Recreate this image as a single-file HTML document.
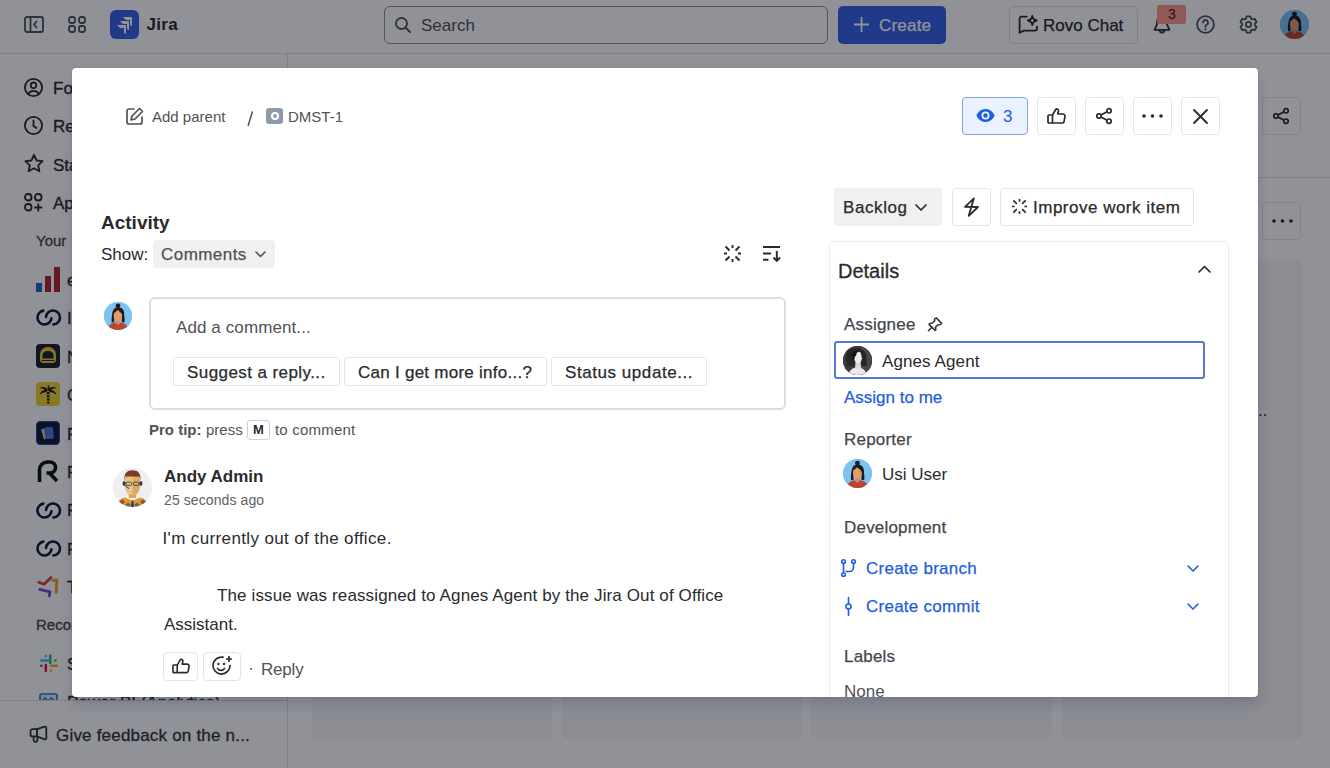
<!DOCTYPE html>
<html><head><meta charset="utf-8">
<style>
*{box-sizing:border-box;margin:0;padding:0}
html,body{width:1330px;height:768px;overflow:hidden;background:#fff}
body{font-family:"Liberation Sans",sans-serif;color:#292A2E;position:relative;font-size:17px}
.a{position:absolute}
.t{position:absolute;white-space:nowrap;line-height:20px;height:20px}
svg{display:block;overflow:visible}
.ic{position:absolute}
.btn{position:absolute;border:1px solid #E3E4E7;border-radius:4px;background:#fff}
#bg{position:absolute;left:0;top:0;width:1330px;height:768px}
#blanket{position:absolute;left:0;top:0;width:1330px;height:768px;background:rgba(4,6,21,0.44)}
#mc .t{transform:translateY(1px)}
.m{-webkit-text-stroke:0.25px currentColor}
#modal{position:absolute;left:72px;top:68px;width:1186px;height:629px;background:#fff;border-radius:4px;box-shadow:0 8px 12px rgba(9,30,66,0.15),0 0 1px rgba(9,30,66,0.31);overflow:hidden}
</style></head><body>
<svg width="0" height="0" style="position:absolute">
<defs>
<symbol id="usi" viewBox="0 0 28 28">
 <rect width="28" height="28" fill="#7CC3F2"/>
 <path d="M9 8.5C8 12.5 7.2 16.5 7.8 20.5L10.2 20.3L10.3 12Z" fill="#1E1B22"/>
 <path d="M19 8.5C20.3 12.5 21 16.5 20.5 20.2L17.8 20.2L17.7 12Z" fill="#1E1B22"/>
 <ellipse cx="13.9" cy="13.9" rx="4.2" ry="6.3" fill="#E49B68"/>
 <path d="M8.7 11.5C8.6 7.2 11 5.2 14 5.2C17.5 5.2 20 7.2 20.3 11.5L19.3 14.5C18 11.8 16 9.2 13.3 8C12 9.8 10.5 10.8 8.7 11.5Z" fill="#1E1B22"/>
 <ellipse cx="14" cy="3.8" rx="2.4" ry="2.2" fill="#1E1B22"/>
 <path d="M3.5 28.5C4 23.5 7 20.8 11.5 20.5L14 23L16.5 20.5C21 20.8 24 23.5 24.5 28.5Z" fill="#B9462D"/>
 <path d="M11.5 20.5L14 23L16.5 20.5L15.8 18.8H12.2Z" fill="#D2866A"/>
</symbol>
<symbol id="andy" viewBox="0 0 39 39">
 <rect width="39" height="39" fill="#EEEFF1"/>
 <path d="M3 40c1-6 4-9.5 9-10.5l7.5 3 7.5-3c5 1 8 4.5 9 10.5z" fill="#E39A2B"/>
 <path d="M6 34l3-2.5 3 2.5-3 2.5zM12 37l3-2.5 3 2.5-3 2.5zM21 37l3-2.5 3 2.5-3 2.5zM27 34l3-2.5 3 2.5-3 2.5z" fill="#566779"/>
 <path d="M9 31l3 3-3 2.5zM30 31l-3 3 3 2.5z" fill="#A8561F"/>
 <path d="M13.5 29.5l6 3.5 6-3.5-1.5-1.5h-9z" fill="#F4F6F8"/>
 <path d="M18.7 32.5h1.6l.7 6.5h-3z" fill="#2D3E50"/>
 <path d="M15.5 23h8l-.3 7h-7.4z" fill="#DDA65C"/>
 <path d="M12 7.5h15v10c0 6-2.5 9.5-7.5 9.5S12 23.5 12 17.5z" fill="#EBC183"/>
 <path d="M19.5 7.5h7.5v10c0 6-2.5 9.5-7.5 9.5z" fill="#DFA965"/>
 <path d="M11.3 13C11 5 14 2.2 19.5 2.2S28 5 27.7 13l-1-4.5H12.3z" fill="#7B3A22"/>
 <rect x="9.7" y="13.2" width="2.8" height="4.6" rx="1.3" fill="#333A44"/>
 <rect x="26.5" y="13.2" width="2.8" height="4.6" rx="1.3" fill="#333A44"/>
 <rect x="13" y="14.2" width="5.6" height="3.2" rx="1.2" fill="none" stroke="#3B3B3B" stroke-width=".9"/>
 <rect x="20.4" y="14.2" width="5.6" height="3.2" rx="1.2" fill="none" stroke="#3B3B3B" stroke-width=".9"/>
 <path d="M11.5 17.5l5.5 3.5" stroke="#333A44" stroke-width=".9"/>
 <circle cx="17.3" cy="21.2" r=".9" fill="#F4F6F8"/>
</symbol>
<symbol id="agnes" viewBox="0 0 29 29">
 <rect width="29" height="29" fill="#3C3C3C"/>
 <rect x="18" width="11" height="29" fill="#474747"/>
 <path d="M3 12C3 5 7 2 13 2s9 3 10 7l1 11H4z" fill="#262626"/>
 <path d="M5 29c1.5-5 4.5-7.5 9.5-7.5S22.5 24 24 29z" fill="#E8E8E8"/>
 <path d="M12 22.5l.5-7h5l.8 7z" fill="#DADADA"/>
 <path d="M13 4.5c3 0 5.5 2 5.5 6 0 1 .8 2 .8 2.5l-.8.6c0 2-1 3.5-3.5 3.5-2.3 0-3.8-2-4-5.5z" fill="#ECECEC"/>
 <path d="M9 13c-.5-5 1.5-9 5-9 1.5 0 2.5.6 3 1.4-2.5.2-4.5 2-5 5l-1 4z" fill="#1C1C1C"/>
 <circle cx="11" cy="8.2" r="2.4" fill="#151515"/>
</symbol>
</defs></svg>
<div id="bg">
  <!-- top nav -->
  <div class="a" style="left:0;top:53px;width:1330px;height:1px;background:#DDDEE1"></div>
  <!-- sidebar toggle -->
  <svg class="ic" style="left:24px;top:16px" width="20" height="17" viewBox="0 0 20 17"><rect x="1" y="1" width="18" height="15" rx="2" fill="none" stroke="#505258" stroke-width="1.8"/><line x1="6.5" y1="1" x2="6.5" y2="16" stroke="#505258" stroke-width="1.8"/><path d="M12.5 5.5 L10 8.5 L12.5 11.5" fill="none" stroke="#505258" stroke-width="1.8" stroke-linecap="round" stroke-linejoin="round"/></svg>
  <!-- apps -->
  <svg class="ic" style="left:68px;top:16px" width="18" height="17" viewBox="0 0 18 17"><g fill="none" stroke="#505258" stroke-width="1.8"><rect x="1" y="1" width="6" height="6" rx="2.2"/><rect x="11" y="1" width="6" height="6" rx="2.2"/><rect x="1" y="10" width="6" height="6" rx="2.2"/><rect x="11" y="10" width="6" height="6" rx="2.2"/></g></svg>
  <!-- jira logo -->
  <div class="a" style="left:110px;top:10px;width:29px;height:29px;border-radius:6px;background:#3563E3"></div>
  <svg class="ic" style="left:115px;top:16px" width="20" height="18" viewBox="0 0 20 18"><g fill="#fff"><path d="M8 1h9v9a2 2 0 0 1-2-2V4h-4z" transform="translate(0,0)"/><path d="M5 5h9v9a2 2 0 0 1-2-2V8H8z"/><path d="M2 9h9v9a2 2 0 0 1-2-2v-4H5z"/></g></svg>
  <div class="t" style="left:146.5px;top:15px;font-weight:700;font-size:17px;color:#292A2E;letter-spacing:.3px">Jira</div>
  <!-- search -->
  <div class="a" style="left:384px;top:6px;width:444px;height:38px;border:1px solid #8C8F97;border-radius:6px"></div>
  <svg class="ic" style="left:395px;top:17px" width="16" height="16" viewBox="0 0 16 16"><circle cx="6.5" cy="6.5" r="5.5" fill="none" stroke="#505258" stroke-width="1.8"/><line x1="10.5" y1="10.5" x2="15" y2="15" stroke="#505258" stroke-width="1.8" stroke-linecap="round"/></svg>
  <div class="t" style="left:421px;top:15.5px;color:#505258">Search</div>
  <!-- create -->
  <div class="a" style="left:838px;top:6px;width:108px;height:38px;border-radius:5px;background:#3563E3"></div>
  <svg class="ic" style="left:853px;top:16px" width="17" height="17" viewBox="0 0 17 17"><path d="M8.5 1v15M1 8.5h15" stroke="#fff" stroke-width="1.8"/></svg>
  <div class="t m" style="left:879px;top:16px;color:#fff;letter-spacing:.2px">Create</div>
  <!-- rovo -->
  <div class="a" style="left:1009px;top:6px;width:129px;height:38px;border:1px solid #DDDEE1;border-radius:5px"></div>
  <svg class="ic" style="left:1012px;top:10px" width="30" height="30" viewBox="0 0 30 30"><g fill="none" stroke="#292A2E" stroke-width="1.8" stroke-linejoin="round" stroke-linecap="round"><path d="M14.8 6.6H9.6a2 2 0 0 0-2 2V22.8L11.8 20.6H23a2 2 0 0 0 2-2V16.6"/><path d="M20.3 6Q20.9 9.9 24.8 10.5Q20.9 11.1 20.3 15Q19.7 11.1 15.8 10.5Q19.7 9.9 20.3 6Z"/></g></svg>
  <div class="t m" style="left:1043px;top:15.5px;color:#292A2E">Rovo Chat</div>
  <!-- bell -->
  <svg class="ic" style="left:1153px;top:14px" width="18" height="21" viewBox="0 0 18 21"><g fill="none" stroke="#33353A" stroke-width="1.8" stroke-linejoin="round"><path d="M4 10.5V7.5a5 5 0 0 1 10 0v3l2.5 5.3H1.5z"/><path d="M6.5 16a2.5 2.5 0 0 0 5 0"/></g></svg>
  <div class="a" style="left:1157px;top:5px;width:29px;height:19px;border-radius:2px;background:#FF9A8A;color:#1E1F23;font-size:14px;line-height:19px;text-align:center;padding-left:1px">3</div>
  <!-- help -->
  <svg class="ic" style="left:1195.7px;top:15.2px" width="19" height="19" viewBox="0 0 19 19"><circle cx="9.5" cy="9.5" r="8.4" fill="none" stroke="#505258" stroke-width="1.8"/><path d="M7 7.5a2.5 2.5 0 1 1 3.5 2.3c-.7.3-1 .8-1 1.5v.5" fill="none" stroke="#505258" stroke-width="1.8" stroke-linecap="round"/><circle cx="9.5" cy="14.3" r="1.1" fill="#505258"/></svg>
  <!-- settings -->
  <svg class="ic" style="left:1238.5px;top:15px" width="19" height="19" viewBox="0 0 19 19"><path d="M6.94 3.74 L7.61 1.32 L11.39 1.32 L12.06 3.74 L13.20 4.40 L15.64 3.77 L17.53 7.04 L15.77 8.84 L15.77 10.16 L17.53 11.96 L15.64 15.23 L13.20 14.60 L12.06 15.26 L11.39 17.68 L7.61 17.68 L6.94 15.26 L5.80 14.60 L3.36 15.23 L1.47 11.96 L3.23 10.16 L3.23 8.84 L1.47 7.04 L3.36 3.77 L5.80 4.40Z" fill="none" stroke="#505258" stroke-width="1.8" stroke-linejoin="round"/><circle cx="9.5" cy="9.5" r="2.6" fill="none" stroke="#505258" stroke-width="1.8"/></svg>
  <!-- avatar -->
  <div class="a" style="left:1280px;top:10px;width:29px;height:29px;border-radius:50%;background:#7FC3EE;overflow:hidden"><svg width="29" height="29"><use href="#usi"/></svg></div>


  <!-- main area -->
  <div class="btn" style="left:1262px;top:97px;width:39px;height:38px;border-color:#E4E5E7"></div>
  <svg class="ic" style="left:1273px;top:108px" width="16" height="16" viewBox="0 0 16 16"><g fill="none" stroke="#292A2E" stroke-width="1.7"><circle cx="3" cy="8" r="2.2"/><circle cx="13" cy="2.8" r="2.2"/><circle cx="13" cy="13.2" r="2.2"/><path d="M5 7l6-3.2M5 9l6 3.2"/></g></svg>
  <div class="a" style="left:288px;top:177px;width:1042px;height:1px;background:#DDDEE1"></div>
  <div class="btn" style="left:1262px;top:202px;width:39px;height:38px;border-color:#E4E5E7"></div>
  <svg class="ic" style="left:1272px;top:219px" width="21" height="4" viewBox="0 0 21 4"><circle cx="2" cy="2" r="1.8" fill="#292A2E"/><circle cx="10.5" cy="2" r="1.8" fill="#292A2E"/><circle cx="19" cy="2" r="1.8" fill="#292A2E"/></svg>
  <div class="a" style="left:312px;top:260px;width:240px;height:479px;border-radius:6px;background:#F6F6F7"></div>
  <div class="a" style="left:562px;top:260px;width:240px;height:479px;border-radius:6px;background:#F6F6F7"></div>
  <div class="a" style="left:811px;top:260px;width:241px;height:479px;border-radius:6px;background:#F6F6F7"></div>
  <div class="a" style="left:1062px;top:260px;width:240px;height:479px;border-radius:6px;background:#F6F6F7"></div>
  <div class="t" style="left:1258px;top:401px;color:#292A2E">..</div>
  <!-- sidebar -->

  <!-- sidebar nav items -->
  <svg class="ic" style="left:24px;top:78px" width="19" height="19" viewBox="0 0 19 19"><g fill="none" stroke="#292A2E" stroke-width="1.8"><circle cx="9.5" cy="9.5" r="8.6"/><circle cx="9.5" cy="7.3" r="2.8"/><path d="M4.2 15.8c1.2-2 3-3 5.3-3s4.1 1 5.3 3"/></g></svg>
  <div class="t" style="left:53px;top:79px;color:#292A2E;-webkit-text-stroke:.3px">For you</div>
  <svg class="ic" style="left:24px;top:116px" width="19" height="19" viewBox="0 0 19 19"><g fill="none" stroke="#292A2E" stroke-width="1.8" stroke-linecap="round"><circle cx="9.5" cy="9.5" r="8.6"/><path d="M9.5 4.5v5.5l3 2"/></g></svg>
  <div class="t" style="left:53px;top:117px;color:#292A2E;-webkit-text-stroke:.3px">Recent</div>
  <svg class="ic" style="left:24px;top:154px" width="20" height="19" viewBox="0 0 20 19"><path d="M10 1l2.6 5.5 6 .7-4.4 4.1 1.2 6L10 14.3 4.6 17.3l1.2-6L1.4 7.2l6-.7z" fill="none" stroke="#292A2E" stroke-width="1.8" stroke-linejoin="round"/></svg>
  <div class="t" style="left:53px;top:156px;color:#292A2E;-webkit-text-stroke:.3px">Starred</div>
  <svg class="ic" style="left:24px;top:193px" width="19" height="19" viewBox="0 0 19 19"><g fill="none" stroke="#292A2E" stroke-width="1.8"><rect x="1" y="1" width="6.5" height="6.5" rx="3"/><rect x="11" y="1" width="6.5" height="6.5" rx="3"/><rect x="1" y="11" width="6.5" height="6.5" rx="3"/><path d="M14.3 10.5v8M10.3 14.5h8"/></g></svg>
  <div class="t" style="left:53px;top:194px;color:#292A2E;-webkit-text-stroke:.3px">Apps</div>
  <div class="t" style="left:36px;top:231px;font-size:15px;color:#44464C;-webkit-text-stroke:.3px">Your</div>
  <!-- project icons -->
  <svg class="ic" style="left:36px;top:267px" width="25" height="25" viewBox="0 0 25 25"><rect x="0" y="16" width="6" height="9" fill="#2266CC"/><rect x="9" y="9" width="6" height="16" fill="#B3272D"/><rect x="18" y="0" width="6" height="25" fill="#B3272D"/></svg>
  <div class="t" style="left:67px;top:271px;color:#292A2E;-webkit-text-stroke:.3px">eCommerce</div>
  <svg class="ic" style="left:37px;top:309px" width="24" height="18" viewBox="0 0 24 18"><path d="M6.3 1.6A7 7 0 1 0 14.46 9.23M9.03 7.89A7 7 0 1 1 16.37 15.49" fill="none" stroke="#0B1C3F" stroke-width="2.6" stroke-linecap="round"/></svg>
  <div class="t" style="left:67px;top:309px;color:#292A2E;-webkit-text-stroke:.3px">Integrations</div>
  <div class="a" style="left:36px;top:344px;width:24px;height:24px;border-radius:4px;background:#1B2236"></div>
  <svg class="ic" style="left:36px;top:344px" width="24" height="24" viewBox="0 0 24 24"><path d="M4 17V11C4 6 7.5 3 12 3s8 3 8 8v6l-2 2H6z" fill="#E9C63A"/><path d="M6.5 12c0-3 2-5 5.5-5s5.5 2 5.5 5v2.5H6.5z" fill="#1B2236"/><path d="M5.5 16.5h13" stroke="#1B2236" stroke-width="1"/></svg>
  <div class="t" style="left:67px;top:348px;color:#292A2E;-webkit-text-stroke:.3px">NASA</div>
  <div class="a" style="left:36px;top:382px;width:24px;height:24px;border-radius:3px;background:#F2D231"></div>
  <svg class="ic" style="left:36px;top:382px" width="24" height="24" viewBox="0 0 24 24"><g fill="#161A2E"><path d="M12 8C10 4.5 5.5 4 3 6.5c2.5-.5 4.5 0 6 1.5-3 .2-5 2.5-5.5 5 2-2 4.5-3 7-3z"/><path d="M12 8c2-3.5 6.5-4 9-1.5-2.5-.5-4.5 0-6 1.5 3 .2 5 2.5 5.5 5-2-2-4.5-3-7-3z"/><path d="M12 8c-1-2.5-.5-4 1-5-.2 1.5.5 3 1 4z"/><rect x="10.7" y="10" width="2.8" height="2.2"/><rect x="10.9" y="13.2" width="2.6" height="2.2"/><rect x="11.1" y="16.4" width="2.4" height="2.2"/><rect x="11.2" y="19.6" width="2.2" height="2"/></g></svg>
  <div class="t" style="left:67px;top:386px;color:#292A2E;-webkit-text-stroke:.3px">Coconut</div>
  <div class="a" style="left:36px;top:421px;width:24px;height:24px;border-radius:4px;background:#141B33;border:1px solid #2A4FB0"></div>
  <svg class="ic" style="left:36px;top:421px" width="24" height="24" viewBox="0 0 24 24"><path d="M5 8.5l7-2.5 3 10-7 2.5z" fill="#C9C3A8"/><path d="M8 7l7.5-1.5 2 11L10 18z" fill="#3E6BD6"/><path d="M10.5 7l6.5-.5.8 11-6.5.5z" fill="#4C78E0"/></svg>
  <div class="t" style="left:67px;top:425px;color:#292A2E;-webkit-text-stroke:.3px">Platform</div>
  <svg class="ic" style="left:36px;top:458px" width="25" height="25" viewBox="0 0 25 25"><g fill="none" stroke="#0D0F14" stroke-width="3.6" stroke-linejoin="round"><path d="M3.5 24V12a8 8 0 0 1 8-8h2.5a5.5 5.5 0 0 1 0 11H10.5M13.5 15l7.5 8"/></g></svg>
  <div class="t" style="left:67px;top:463px;color:#292A2E;-webkit-text-stroke:.3px">Retail</div>
  <svg class="ic" style="left:37px;top:502px" width="24" height="18" viewBox="0 0 24 18"><path d="M6.3 1.6A7 7 0 1 0 14.46 9.23M9.03 7.89A7 7 0 1 1 16.37 15.49" fill="none" stroke="#0B1C3F" stroke-width="2.6" stroke-linecap="round"/></svg>
  <div class="t" style="left:67px;top:501px;color:#292A2E;-webkit-text-stroke:.3px">Project</div>
  <svg class="ic" style="left:37px;top:540px" width="24" height="18" viewBox="0 0 24 18"><path d="M6.3 1.6A7 7 0 1 0 14.46 9.23M9.03 7.89A7 7 0 1 1 16.37 15.49" fill="none" stroke="#0B1C3F" stroke-width="2.6" stroke-linecap="round"/></svg>
  <div class="t" style="left:67px;top:540px;color:#292A2E;-webkit-text-stroke:.3px">Project</div>
  <svg class="ic" style="left:37px;top:576px" width="23" height="23" viewBox="0 0 23 23"><g fill="none" stroke-width="2.8" stroke-linecap="round" stroke-linejoin="round"><path d="M1.8 6.3L7 8.2L14 1.5" stroke="#D9433A"/><path d="M2.7 13.3L13 15.8L12.3 20" stroke="#7B4FD0"/><path d="M15.8 4.5L19.8 3.8L19.2 16.5" stroke="#E6A81E"/></g></svg>
  <div class="t" style="left:67px;top:578px;color:#292A2E;-webkit-text-stroke:.3px">Teams</div>
  <div class="t" style="left:36px;top:615px;font-size:15px;color:#44464C;-webkit-text-stroke:.3px">Recommended</div>
  <svg class="ic" style="left:40px;top:654px" width="18" height="18" viewBox="0 0 18 18"><g stroke-width="2.6" stroke-linecap="round" fill="none"><path d="M1 6.5h7" stroke="#36C5F0"/><path d="M5.8 2.1h0" stroke="#36C5F0"/><path d="M10.2 1.5v7.5" stroke="#2EB67D"/><path d="M15.5 6.5h0" stroke="#2EB67D"/><path d="M5.8 11v6" stroke="#E01E5A"/><path d="M1.4 11.8h0" stroke="#E01E5A"/><path d="M11 11.8h6" stroke="#ECB22E"/><path d="M11.1 16.8h0" stroke="#ECB22E"/></g></svg>
  <div class="t" style="left:67px;top:655px;color:#292A2E;-webkit-text-stroke:.3px">Slack</div>
  <svg class="ic" style="left:39px;top:693px" width="19" height="14" viewBox="0 0 19 14"><rect x="1" y="1" width="17" height="12" rx="1.5" fill="#DCE8F8" stroke="#2F6FD0" stroke-width="1.6"/><path d="M3 8l3-3 3 3 3-3 4 3" fill="none" stroke="#2F6FD0" stroke-width="1.4"/><circle cx="5" cy="9" r="1" fill="#E0A020"/></svg>
  <div class="t" style="left:67px;top:693px;color:#292A2E;-webkit-text-stroke:.3px">Power BI (Analytics)</div>
  <div class="a" style="left:0;top:700px;width:287px;height:68px;background:#fff"></div>
  <div class="a" style="left:287px;top:54px;width:1px;height:714px;background:#DDDEE1"></div>
  <div class="a" style="left:0;top:700px;width:287px;height:1px;background:#DDDEE1"></div>
  <svg class="ic" style="left:25px;top:720px" width="30" height="30" viewBox="0 0 30 30"><g fill="none" stroke="#33353A" stroke-width="1.8" stroke-linejoin="round"><path d="M12.1 9.2H7.5a2 2 0 0 0-2 2v3.2a2 2 0 0 0 2 2h4.6z"/><path d="M12.1 9.2L19.5 6.6a1.4 1.4 0 0 1 1.8 1.3v10.2a1.4 1.4 0 0 1-1.8 1.3L12.1 16.4z"/><path d="M8.6 16.4v3.6a1.9 1.9 0 0 0 3.8 0v-3.6"/></g></svg>
  <div class="t" style="left:56px;top:726px;color:#33353A;letter-spacing:.2px;-webkit-text-stroke:.3px">Give feedback on the n...</div>
</div>
<div id="blanket"></div>
<div id="modal"><div id="mc" class="a" style="left:-72px;top:-68px;width:1330px;height:768px">
  <!-- header breadcrumb -->
  <svg class="ic" style="left:126px;top:107px" width="18" height="18" viewBox="0 0 18 18"><path d="M8 2H3a2 2 0 0 0-2 2v11a2 2 0 0 0 2 2h11a2 2 0 0 0 2-2v-5" fill="none" stroke="#505258" stroke-width="1.7" stroke-linecap="round"/><path d="M13.5 1.5l3 3L9 12l-4 1 1-4z" fill="none" stroke="#505258" stroke-width="1.7" stroke-linejoin="round"/></svg>
  <div class="t" style="left:152px;top:106px;font-size:15px;color:#505258">Add parent</div>
  <svg class="ic" style="left:245px;top:109px" width="10" height="19" viewBox="0 0 10 19"><path d="M7.3 3L3.2 16.5" stroke="#505258" stroke-width="1.5" stroke-linecap="round"/></svg>
  <div class="a" style="left:266px;top:108px;width:17px;height:16px;border-radius:3px;background:#8C9BAB"></div>
  <div class="a" style="left:270.5px;top:112px;width:8px;height:8px;border-radius:50%;border:2px solid #fff"></div>
  <div class="t" style="left:288px;top:106px;font-size:15px;color:#505258">DMST-1</div>

  <!-- header actions -->
  <div class="a" style="left:962px;top:97px;width:66px;height:38px;border:1px solid #85A3EC;border-radius:4px;background:#E9F2FE"></div>
  <svg class="ic" style="left:976px;top:108px" width="19" height="15" viewBox="0 0 19 15"><path d="M9.5 1C5 1 1.8 4 .5 7.5 1.8 11 5 14 9.5 14s7.7-3 9-6.5C17.2 4 14 1 9.5 1z" fill="#1F5CE0"/><circle cx="9.5" cy="7.5" r="4" fill="#E9F2FE"/><circle cx="9.5" cy="7.5" r="2.2" fill="#1F5CE0"/></svg>
  <div class="t" style="left:1003px;top:106px;font-size:17px;color:#1F5CE0">3</div>
  <div class="btn" style="left:1037px;top:97px;width:39px;height:38px"></div>
  <svg class="ic" style="left:1047px;top:108px" width="19" height="16" viewBox="0 0 19 16"><path d="M5.5 7v8H2a1 1 0 0 1-1-1V8a1 1 0 0 1 1-1zM5.5 7l3.5-6a2 2 0 0 1 2.5 2L10.8 6H16a2 2 0 0 1 2 2.3l-1 5.5A2 2 0 0 1 15 15H5.5" fill="none" stroke="#292A2E" stroke-width="1.7" stroke-linejoin="round"/></svg>
  <div class="btn" style="left:1085px;top:97px;width:39px;height:38px"></div>
  <svg class="ic" style="left:1096px;top:108px" width="16" height="16" viewBox="0 0 16 16"><g fill="none" stroke="#292A2E" stroke-width="1.7"><circle cx="3" cy="8" r="2.2"/><circle cx="13" cy="2.8" r="2.2"/><circle cx="13" cy="13.2" r="2.2"/><path d="M5 7l6-3.2M5 9l6 3.2"/></g></svg>
  <div class="btn" style="left:1133px;top:97px;width:39px;height:38px"></div>
  <svg class="ic" style="left:1142px;top:114px" width="21" height="4" viewBox="0 0 21 4"><circle cx="2" cy="2" r="1.8" fill="#292A2E"/><circle cx="10.5" cy="2" r="1.8" fill="#292A2E"/><circle cx="19" cy="2" r="1.8" fill="#292A2E"/></svg>
  <div class="btn" style="left:1181px;top:97px;width:39px;height:38px"></div>
  <svg class="ic" style="left:1193px;top:109px" width="15" height="15" viewBox="0 0 15 15"><path d="M1 1l13 13M14 1L1 14" stroke="#292A2E" stroke-width="1.8" stroke-linecap="round"/></svg>

  <!-- activity -->
  <div class="t" style="left:101px;top:212px;font-size:19px;font-weight:700;color:#292A2E">Activity</div>
  <div class="t" style="left:101px;top:244px;font-size:17px;color:#292A2E">Show:</div>
  <div class="a" style="left:153px;top:240px;width:122px;height:28px;border-radius:4px;background:#F0F0F1"></div>
  <div class="t m" style="left:161px;top:244px;font-size:17px;color:#505258;letter-spacing:.45px">Comments</div>
  <svg class="ic" style="left:255px;top:251px" width="11" height="7" viewBox="0 0 11 7"><path d="M1 1l4.5 4.5L10 1" fill="none" stroke="#505258" stroke-width="1.6" stroke-linecap="round" stroke-linejoin="round"/></svg>
  <svg class="ic" style="left:724px;top:245px" width="17" height="17" viewBox="0 0 17 17"><g stroke="#292A2E" stroke-width="1.9" stroke-linecap="butt"><path d="M8.5 0v3M8.5 14v3M0 8.5h3M14 8.5h3M1.5 1.5l4 4M15.5 1.5l-4 4M1.5 15.5l4-4M15.5 15.5l-4-4"/></g></svg>
  <svg class="ic" style="left:763px;top:246px" width="18" height="16" viewBox="0 0 18 16"><g stroke="#292A2E" stroke-width="1.9" fill="none"><path d="M0 1h17M0 7.5h8M0 13.8h5.5M13.8 5v10M10.5 11.5l3.3 3.3 3.3-3.3"/></g></svg>

  <!-- comment editor -->
  <div class="a" style="left:104px;top:302px;width:28px;height:28px;border-radius:50%;background:#7FC3EE;overflow:hidden"><svg width="28" height="28"><use href="#usi"/></svg></div>
  <div class="a" style="left:149px;top:297px;width:637px;height:113px;border:2px solid #DCDDE0;border-radius:6px"></div>
  <div class="t" style="left:176px;top:317px;font-size:17px;color:#505258;letter-spacing:.1px">Add a comment...</div>
  <div class="btn" style="left:173px;top:357px;width:167px;height:29px;border-radius:3px"></div>
  <div class="t m" style="left:187px;top:362px;font-size:17px;color:#292A2E;letter-spacing:.42px">Suggest a reply...</div>
  <div class="btn" style="left:344px;top:357px;width:203px;height:29px;border-radius:3px"></div>
  <div class="t m" style="left:358px;top:362px;font-size:17px;color:#292A2E;letter-spacing:.26px">Can I get more info...?</div>
  <div class="btn" style="left:551px;top:357px;width:156px;height:29px;border-radius:3px"></div>
  <div class="t m" style="left:565px;top:362px;font-size:17px;color:#292A2E;letter-spacing:.56px">Status update...</div>
  <div class="t" style="left:149px;top:419px;font-size:15px;font-weight:700;color:#505258">Pro tip:</div>
  <div class="t" style="left:206px;top:419px;font-size:15px;color:#505258">press</div>
  <div class="a" style="left:247px;top:420px;width:23px;height:20px;border:1px solid #CFD1D5;border-radius:3px;font-size:13px;font-weight:700;line-height:18px;text-align:center;color:#292A2E">M</div>
  <div class="t" style="left:275px;top:419px;font-size:15px;color:#505258;letter-spacing:.2px">to comment</div>

  <!-- comment -->
  <div class="a" style="left:113px;top:468px;width:39px;height:39px;border-radius:50%;background:#EFEFEF;overflow:hidden"><svg width="39" height="39"><use href="#andy"/></svg></div>
  <div class="t" style="left:164px;top:466px;font-size:17px;font-weight:700;color:#292A2E">Andy Admin</div>
  <div class="t" style="left:164px;top:489px;font-size:14px;color:#5E6068;letter-spacing:.1px">25 seconds ago</div>
  <div class="t" style="left:162.5px;top:528px;font-size:17px;color:#292A2E;letter-spacing:.37px">I'm currently out of the office.</div>
  <div class="t" style="left:217px;top:585px;font-size:17px;color:#292A2E;letter-spacing:.12px">The issue was reassigned to Agnes Agent by the Jira Out of Office</div>
  <div class="t" style="left:164px;top:614px;font-size:17px;color:#292A2E">Assistant.</div>
  <div class="btn" style="left:163px;top:652px;width:35px;height:29px;border-radius:4px"></div>
  <svg class="ic" style="left:172px;top:658px" width="18" height="16" viewBox="0 0 19 16"><path d="M5.5 7v8H2a1 1 0 0 1-1-1V8a1 1 0 0 1 1-1zM5.5 7l3.5-6a2 2 0 0 1 2.5 2L10.8 6H16a2 2 0 0 1 2 2.3l-1 5.5A2 2 0 0 1 15 15H5.5" fill="none" stroke="#292A2E" stroke-width="1.7" stroke-linejoin="round"/></svg>
  <div class="btn" style="left:203px;top:652px;width:38px;height:29px;border-radius:4px"></div>
  <svg class="ic" style="left:212px;top:656px" width="21" height="20" viewBox="0 0 21 20"><path d="M18 9.5A8.5 8.5 0 1 1 11 1.2" fill="none" stroke="#292A2E" stroke-width="1.7" stroke-linecap="round"/><circle cx="6.5" cy="8" r="1.2" fill="#292A2E"/><circle cx="12" cy="8" r="1.2" fill="#292A2E"/><path d="M5.5 12.5c1.8 2.5 5.2 2.5 7 0" fill="none" stroke="#292A2E" stroke-width="1.7" stroke-linecap="round"/><path d="M17 0v6M14 3h6" stroke="#292A2E" stroke-width="1.7"/></svg>
  <div class="a" style="left:250px;top:668px;width:2px;height:2px;border-radius:50%;background:#505258"></div>
  <div class="t" style="left:261px;top:659px;font-size:17px;color:#505258;letter-spacing:-.2px">Reply</div>

  <!-- right: status row -->
  <div class="a" style="left:834px;top:188px;width:108px;height:38px;border-radius:4px;background:#F0F0F1"></div>
  <div class="t m" style="left:843px;top:197px;font-size:17px;color:#292A2E;letter-spacing:.6px">Backlog</div>
  <svg class="ic" style="left:915px;top:204px" width="12" height="7" viewBox="0 0 12 7"><path d="M1 1l5 5 5-5" fill="none" stroke="#292A2E" stroke-width="1.7" stroke-linecap="round" stroke-linejoin="round"/></svg>
  <div class="btn" style="left:952px;top:188px;width:39px;height:38px"></div>
  <svg class="ic" style="left:964px;top:197px" width="16" height="20" viewBox="0 0 16 20"><path d="M9.9 1.3L1 9.8L14 10L4.7 18.8Z" fill="none" stroke="#292A2E" stroke-width="1.8" stroke-linejoin="round"/></svg>
  <div class="btn" style="left:1000px;top:188px;width:194px;height:38px"></div>
  <svg class="ic" style="left:1012px;top:199px" width="15" height="15" viewBox="0 0 17 17"><g stroke="#292A2E" stroke-width="1.9"><path d="M8.5 0v3M8.5 14v3M0 8.5h3M14 8.5h3M1.5 1.5l4 4M15.5 1.5l-4 4M1.5 15.5l4-4M15.5 15.5l-4-4"/></g></svg>
  <div class="t m" style="left:1033px;top:197px;font-size:17px;color:#292A2E;letter-spacing:.5px">Improve work item</div>

  <!-- details panel -->
  <div class="a" style="left:829px;top:241px;width:400px;height:500px;border:1px solid #EBECEE;border-radius:4px"></div>
  <div class="t m" style="left:838px;top:260px;font-size:20px;color:#292A2E;-webkit-text-stroke:.3px">Details</div>
  <svg class="ic" style="left:1198px;top:265px" width="13" height="8" viewBox="0 0 13 8"><path d="M1 7l5.5-5.5L12 7" fill="none" stroke="#292A2E" stroke-width="1.7" stroke-linecap="round" stroke-linejoin="round"/></svg>
  <div class="t" style="left:844px;top:314px;font-size:17px;color:#44464C;letter-spacing:.2px;-webkit-text-stroke:.25px">Assignee</div>
  <svg class="ic" style="left:922px;top:312px" width="26" height="26" viewBox="0 0 26 26"><g fill="none" stroke="#33353A" stroke-width="1.5" stroke-linejoin="round" stroke-linecap="round"><path d="M14.2 5.9L19.7 11.4L18.3 12.5L15.6 13L13.4 15.6L14 17.6L13 18.4L7 12.4L7.8 11.4L10.4 11L12.8 8.6L12.5 7.2Z"/><path d="M9.8 15.2L6.4 18.8"/></g></svg>
  <div class="a" style="left:834px;top:341px;width:371px;height:38px;border:2px solid #5577DC;border-radius:3px"></div>
  <div class="a" style="left:843px;top:346px;width:29px;height:29px;border-radius:50%;background:#2B2B2B;overflow:hidden"><svg width="29" height="29"><use href="#agnes"/></svg></div>
  <div class="t" style="left:882px;top:351px;font-size:17px;color:#292A2E;letter-spacing:.1px">Agnes Agent</div>
  <div class="t m" style="left:844px;top:387px;font-size:17px;color:#1F5CE0">Assign to me</div>
  <div class="t" style="left:844px;top:429px;font-size:17px;color:#44464C;letter-spacing:.2px;-webkit-text-stroke:.25px">Reporter</div>
  <div class="a" style="left:843px;top:459px;width:29px;height:29px;border-radius:50%;background:#7FC3EE;overflow:hidden"><svg width="29" height="29"><use href="#usi"/></svg></div>
  <div class="t" style="left:882px;top:464px;font-size:17px;color:#292A2E">Usi User</div>
  <div class="t" style="left:844px;top:517px;font-size:17px;color:#44464C;letter-spacing:.2px;-webkit-text-stroke:.25px">Development</div>
  <svg class="ic" style="left:841px;top:559px" width="15" height="18" viewBox="0 0 15 18"><g fill="none" stroke="#1F5CE0" stroke-width="1.6"><circle cx="2.5" cy="2.5" r="1.8"/><circle cx="12.5" cy="2.5" r="1.8"/><circle cx="2.5" cy="15.5" r="1.8"/><path d="M2.5 4.5v9M12.5 4.5v4a4 4 0 0 1-4 4H4.5"/></g></svg>
  <div class="t m" style="left:866px;top:558px;font-size:17px;color:#1F5CE0;letter-spacing:.25px">Create branch</div>
  <svg class="ic" style="left:1187px;top:565px" width="12" height="7" viewBox="0 0 12 7"><path d="M1 1l5 5 5-5" fill="none" stroke="#1F5CE0" stroke-width="1.6" stroke-linecap="round" stroke-linejoin="round"/></svg>
  <svg class="ic" style="left:844px;top:597px" width="9" height="19" viewBox="0 0 9 19"><g fill="none" stroke="#1F5CE0" stroke-width="1.6"><circle cx="4.5" cy="9.5" r="2.5"/><path d="M4.5 0v7M4.5 12v7"/></g></svg>
  <div class="t m" style="left:866px;top:596px;font-size:17px;color:#1F5CE0;letter-spacing:.25px">Create commit</div>
  <svg class="ic" style="left:1187px;top:603px" width="12" height="7" viewBox="0 0 12 7"><path d="M1 1l5 5 5-5" fill="none" stroke="#1F5CE0" stroke-width="1.6" stroke-linecap="round" stroke-linejoin="round"/></svg>
  <div class="t" style="left:844px;top:646px;font-size:17px;color:#44464C;letter-spacing:.2px;-webkit-text-stroke:.25px">Labels</div>
  <div class="t" style="left:844px;top:681px;font-size:17px;color:#505258">None</div>
</div></div>
</body></html>
